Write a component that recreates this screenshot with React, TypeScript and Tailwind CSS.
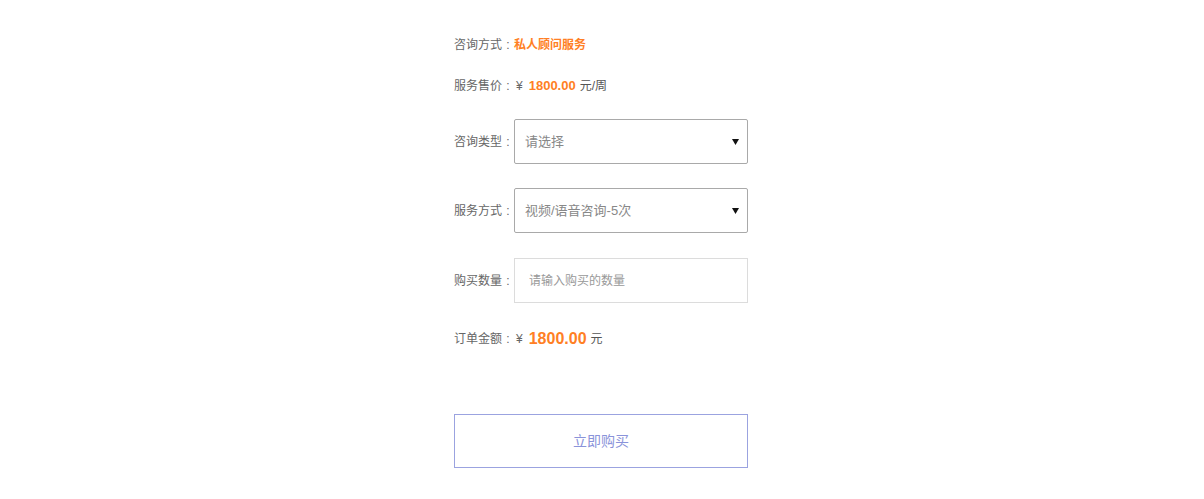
import { useState } from 'react'

const font = { fontFamily: '"Liberation Sans", "Noto Sans CJK SC", sans-serif' }

function Label({ children }: { children: string }) {
    return (
        <span className="flex w-[60px] shrink-0 text-[12px] text-[#666]">
            {children}
            <span className="w-[12px] text-center">:</span>
        </span>
    )
}

function SelectBox({ value }: { value: string }) {
    return (
        <div className="relative flex h-[45px] w-[234px] items-center border border-[#a9a9a9] rounded-[2px] pl-[10px] text-[13px] text-[#888]">
            {value}
            <svg width="7" height="6" viewBox="0 0 7 6" className="absolute right-[8px] top-[19px]">
                <polygon points="0,0 7,0 3.5,6" fill="#111" />
            </svg>
        </div>
    )
}

export default function App() {
    const [qty, setQty] = useState('')

    return (
        <div className="flex min-h-screen justify-center bg-white pr-[2px]" style={font}>
            <div className="w-[294px] pt-[35px]">
                <div className="flex h-[20px] items-center">
                    <Label>咨询方式</Label>
                    <span className="text-[12px] font-bold text-[#ff7f24]">私人顾问服务</span>
                </div>

                <div className="mt-[21px] flex h-[20px] items-center text-[12px] text-[#666]">
                    <Label>服务售价</Label>
                    <span className="ml-[2px]">¥</span>
                    <span className="ml-[6px] text-[13px] font-bold text-[#ff7f24]">1800.00</span>
                    <span className="ml-[4px] text-[#555]">元/周</span>
                </div>

                <div className="mt-[23px] flex items-center">
                    <Label>咨询类型</Label>
                    <SelectBox value="请选择" />
                </div>

                <div className="mt-[24px] flex items-center">
                    <Label>服务方式</Label>
                    <SelectBox value="视频/语音咨询-5次" />
                </div>

                <div className="mt-[25px] flex items-center">
                    <Label>购买数量</Label>
                    <input
                        value={qty}
                        onChange={(e) => setQty(e.target.value)}
                        placeholder="请输入购买的数量"
                        className="h-[45px] w-[234px] border border-[#dcdcdc] pl-[14px] text-[12px] text-[#555] outline-none placeholder:text-[#999]"
                    />
                </div>

                <div className="mt-[26px] flex h-[20px] items-center text-[12px] text-[#666]">
                    <Label>订单金额</Label>
                    <span className="ml-[2px]">¥</span>
                    <span className="ml-[6px] text-[16px] font-bold text-[#ff7f24]">1800.00</span>
                    <span className="ml-[4px] text-[#555]">元</span>
                </div>

                <button className="mt-[65px] flex h-[54px] w-[294px] items-center justify-center border border-[#9ba3e0] text-[14px] text-[#8a93da]">
                    立即购买
                </button>
            </div>
        </div>
    )
}
